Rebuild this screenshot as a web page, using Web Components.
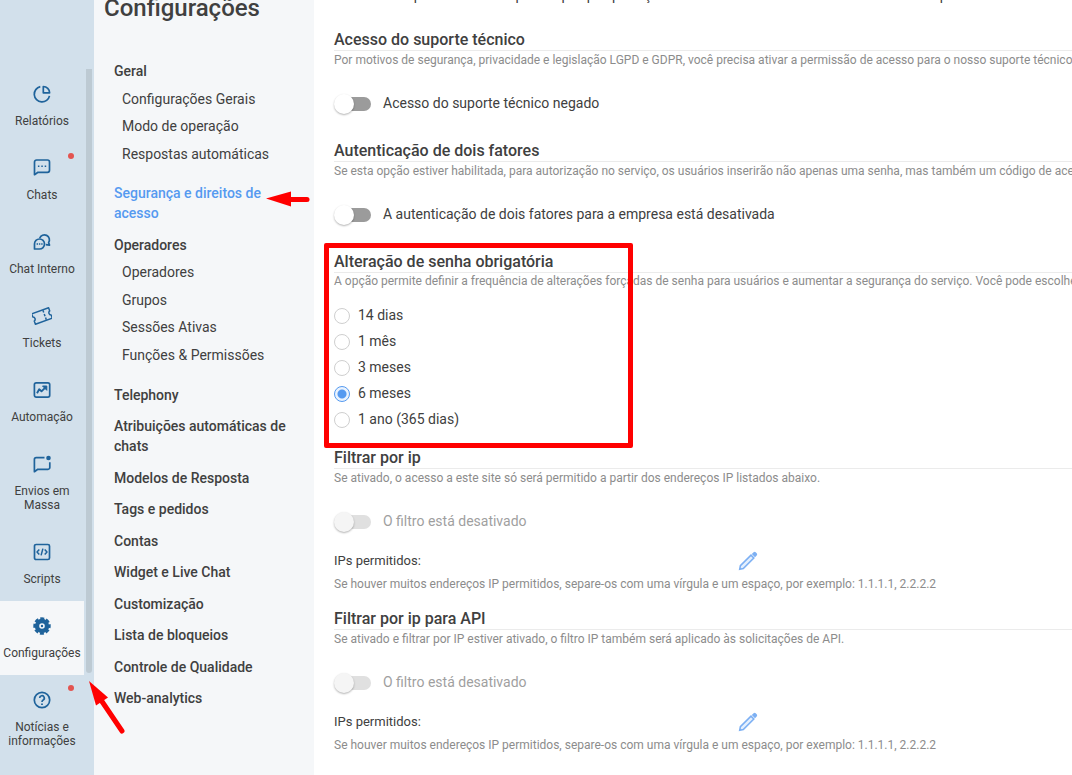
<!DOCTYPE html>
<html lang="pt">
<head>
<meta charset="utf-8">
<title>Configurações</title>
<style>
html, body { margin: 0; height: 100%; }
body { font-family: Roboto, "Liberation Sans", sans-serif; color: #404040; background: #fff; overflow: hidden; }
</style>
</head>
<body>
<settings-app></settings-app>
<script>
const define = (name, html, setup) => {
  const tpl = document.createElement('template');
  tpl.innerHTML = html;
  customElements.define(name, class extends HTMLElement {
    connectedCallback() {
      if (this.shadowRoot) return;
      this.attachShadow({ mode: 'open' }).append(tpl.content.cloneNode(true));
      if (setup) setup(this, this.shadowRoot);
    }
  });
};

const ICONS = {
  reports: '<path d="M8.300 2.700A7.700 7.700 0 1 0 17.500 11.800"/><path d="M11.300 2.500v6.300h6.300a6.300 6.300 0 0 0-6.300-6.300z"/>',
  chats: '<path d="M2.500 16.700V4a2 2 0 0 1 2-2h11a2 2 0 0 1 2 2v8.300a2 2 0 0 1-2 2H6z"/><path d="M5.900 8.200h1.500M9.300 8.200h1.500M12.700 8.200h1.500" stroke-width="1.500"/>',
  internal: '<path d="M7.700 6.200A5 5 0 1 1 16.600 10.600l.9 2.500-3.700-.5"/><path d="M2.500 17V12a5 5 0 1 1 5 5z"/><path d="M4.600 12h1.400M6.900 12h1.400M9.200 12h1.400" stroke-width="1.400"/>',
  tickets: '<g transform="rotate(-20 10 10)"><path d="M1 4.500h18v3.400a2.200 2.200 0 0 0 0 4.200v3.400H1v-3.400a2.200 2.200 0 0 0 0-4.200z" stroke-width="1.500"/><path d="M12.800 5v2.300M12.800 8.800v2.400M12.800 12.700V15" stroke-width="1.500"/></g>',
  automation: '<rect x="2.400" y="2.800" width="15.300" height="14.300" rx="1.800"/><path d="M5 13.300l2.200-4 2.300 2 4.500-4.500" stroke-width="1.900"/><path d="M10.500 6h4.300v4.300z" fill="currentColor" stroke-width="1"/>',
  mass: '<path d="M12.500 3.700H4.200a1.800 1.800 0 0 0-1.800 1.800v12.200l3.400-2.400H16a1.800 1.800 0 0 0 1.800-1.800V8.200"/><circle cx="16.500" cy="4" r="2.300" fill="currentColor" stroke="none"/>',
  scripts: '<rect x="2.500" y="2.500" width="15" height="15" rx="1.600"/><path d="M7.300 7.500L5 10l2.300 2.500M12.700 7.500L15 10l-2.300 2.500M10.900 6.600l-1.800 6.800" stroke-width="1.500"/>',
  settings: '<circle cx="10" cy="10" r="5" stroke-width="4.400"/><circle cx="10" cy="10" r="7.400" stroke-width="2.600" stroke-dasharray="3.900 1.912" stroke-dashoffset="1.950"/><circle cx="10" cy="10" r="1.200" fill="currentColor" stroke="none"/>',
  news: '<circle cx="10" cy="10" r="7.700"/><path d="M7.700 8.100a2.300 2.300 0 1 1 3.500 1.900c-.9.600-1.200 1-1.200 2"/><path d="M10 13.600v1.500" stroke-width="1.800"/>'
};

define('rail-item', `
<style>
:host { display: block; position: relative; }
a { display: flex; flex-direction: column; align-items: center; gap: 10px; padding: 15px 0; color: #404040; font-size: 12px; line-height: 14px; text-align: center; text-decoration: none; }
:host([active]) a { background: #f5f7f9; }
svg { display: block; width: 20px; height: 20px; color: #1f639b; }
.dot { position: absolute; top: 10px; right: 10px; width: 6px; height: 6px; border-radius: 50%; background: #e35450; display: none; }
:host([alert]) .dot { display: block; }
</style>
<a href="#"><svg viewBox="0 0 20 20" fill="none" stroke="currentColor" stroke-width="1.700" stroke-linejoin="round" aria-hidden="true"></svg><span><slot></slot></span></a><i class="dot"></i>`,
  (el, root) => { root.querySelector('svg').innerHTML = ICONS[el.getAttribute('icon')]; });

define('app-rail', `
<style>
:host { display: flex; align-items: flex-start; background: #d2e0eb; padding-top: 69px; box-sizing: border-box; gap: 2px; }
nav { flex: 0 0 84px; }
.bar { flex: 0 0 6px; height: 604px; background: #bdcad3; border-radius: 0 0 3px 3px; }
</style>
<nav>
<rail-item icon="reports">Relatórios</rail-item>
<rail-item icon="chats" alert>Chats</rail-item>
<rail-item icon="internal">Chat Interno</rail-item>
<rail-item icon="tickets">Tickets</rail-item>
<rail-item icon="automation">Automação</rail-item>
<rail-item icon="mass">Envios em<br>Massa</rail-item>
<rail-item icon="scripts">Scripts</rail-item>
<rail-item icon="settings" active>Configurações</rail-item>
<rail-item icon="news" alert>Notícias e informações</rail-item>
</nav><div class="bar"></div>`);

define('menu-link', `
<style>
:host { display: block; }
a { display: block; color: #404040; font-size: 14px; line-height: 20px; font-weight: 500; text-decoration: none; }
:host([sub]) a { padding-left: 8px; font-weight: 400; }
:host([active]) a { color: #559af0; }
</style>
<a href="#"><slot></slot></a>`);

define('settings-menu', `
<style>
:host { display: block; background: #f5f7f9; box-sizing: border-box; overflow: hidden; }
h1 { margin: -8px 0 0 10px; font-size: 24px; line-height: 32px; font-weight: 500; }
nav { padding: 37px 20px 0; }
section { margin-bottom: 19px; }
section + menu-link { margin-bottom: 12px; }
section:last-of-type { margin-bottom: 20px; }
[sub]:nth-of-type(even) { margin-top: 8px; }
[sub]:nth-of-type(odd) { margin-top: 7px; }
section:last-of-type [sub]:nth-of-type(even) { margin-top: 7px; }
section:last-of-type [sub]:nth-of-type(odd) { margin-top: 8px; }
.plain menu-link { margin-top: 12px; }
.plain menu-link:nth-child(even) { margin-top: 11px; }
.plain menu-link:first-child { margin-top: 0; }
</style>
<h1>Configurações</h1>
<nav>
<section><menu-link>Geral</menu-link><menu-link sub>Configurações Gerais</menu-link><menu-link sub>Modo de operação</menu-link><menu-link sub>Respostas automáticas</menu-link></section>
<menu-link active>Segurança e direitos de acesso</menu-link>
<section><menu-link>Operadores</menu-link><menu-link sub>Operadores</menu-link><menu-link sub>Grupos</menu-link><menu-link sub>Sessões Ativas</menu-link><menu-link sub>Funções &amp; Permissões</menu-link></section>
<div class="plain"><menu-link>Telephony</menu-link><menu-link>Atribuições automáticas de chats</menu-link><menu-link>Modelos de Resposta</menu-link><menu-link>Tags e pedidos</menu-link><menu-link>Contas</menu-link><menu-link>Widget e Live Chat</menu-link><menu-link>Customização</menu-link><menu-link>Lista de bloqueios</menu-link><menu-link>Controle de Qualidade</menu-link><menu-link>Web-analytics</menu-link></div>
</nav>`);

define('toggle-switch', `
<style>
:host { display: block; }
label { display: flex; align-items: center; gap: 12px; font-size: 14px; line-height: 20px; }
input { appearance: none; margin: 2px 0 0; width: 37px; height: 20px; border-radius: 10px; flex: none; display: flex; align-items: center; position: relative; }
input::before { content: ""; width: 34px; height: 14px; margin-left: 3px; border-radius: 7px; background: #9b9b9b; }
input::after { content: ""; position: absolute; left: 0; top: 0; width: 20px; height: 20px; border-radius: 50%; background: #fff; box-shadow: 0 1px 2px rgba(0,0,0,.3); }
:host([disabled]) label { color: #9f9f9f; }
:host([disabled]) input::before { background: #e0e0e0; }
:host([disabled]) input::after { background: #f5f5f5; }
</style>
<label><input type="checkbox" role="switch"><span><slot></slot></span></label>`,
  (el, root) => { root.querySelector('input').disabled = el.hasAttribute('disabled'); });

define('radio-group', `
<style>
:host { display: block; }
fieldset { border: 0; margin: 0; padding: 0; display: grid; gap: 6px; }
label { display: flex; gap: 8px; font-size: 14px; line-height: 20px; }
input { appearance: none; box-sizing: border-box; flex: none; width: 16px; height: 16px; margin: 3px 0 0; border: 1px solid #cfcfcf; border-radius: 50%; }
input:checked { border-color: #559af0; background: radial-gradient(circle, #559af0 4px, #eaf3fe 5px); }
</style>
<fieldset aria-label="Alteração de senha obrigatória">
<label><input type="radio" name="p"><span>14 dias</span></label>
<label><input type="radio" name="p"><span>1 mês</span></label>
<label><input type="radio" name="p"><span>3 meses</span></label>
<label><input type="radio" name="p" checked><span>6 meses</span></label>
<label><input type="radio" name="p"><span>1 ano (365 dias)</span></label>
</fieldset>`);

define('settings-section', `
<style>
:host { display: block; }
h2 { margin: 0; border-bottom: 1px solid #ebebeb; font-size: 16px; line-height: 20px; font-weight: 500; }
p { margin: 0 0 23px; font-size: 12px; line-height: 18px; color: #8c8c8c; white-space: nowrap; }
:host([compact]) p { margin-bottom: 16px; line-height: 16px; }
</style>
<h2><slot name="title"></slot></h2><p><slot name="note"></slot></p><slot></slot>`);

define('ip-list', `
<style>
:host { display: block; }
.row { display: flex; align-items: center; justify-content: space-between; max-width: 424px; margin-top: 19px; font-size: 13px; line-height: 20px; }
button { border: 0; padding: 0; background: none; color: #7db0f3; width: 20px; height: 20px; }
svg { display: block; }
p { margin: 4px 0 0; font-size: 12px; line-height: 18px; color: #8c8c8c; white-space: nowrap; }
</style>
<div class="row"><span>IPs permitidos:</span><button type="button" aria-label="Editar"><svg width="20" height="20" viewBox="0 0 20 20" fill="none" stroke="currentColor" stroke-width="1.600"><path d="M1.700 18.300l.7-3.600L13 4.200l2.800 2.800L5.300 17.600z" fill="#e4effd"/><path d="M13.800 3l1.800-1.700a1.500 1.500 0 0 1 2.100 0l1 1a1.500 1.500 0 0 1 0 2.100L17 6.200z" fill="currentColor" stroke="none"/></svg></button></div>
<p>Se houver muitos endereços IP permitidos, separe-os com uma vírgula e um espaço, por exemplo: 1.1.1.1, 2.2.2.2</p>`);

define('settings-app', `
<style>
:host { display: grid; grid-template-columns: 94px 220px minmax(0, 1fr); min-height: 100vh; position: relative; overflow: hidden; }
main { padding: 0 0 0 20px; overflow: hidden; }
.tail { margin: -15px 0 25px; font-size: 14px; line-height: 20px; white-space: pre; }
settings-section { margin-bottom: 27px; }
settings-section[compact] { margin-bottom: 19px; }
settings-section.ip { margin-bottom: 16px; }
.boxed { position: relative; }
.boxed::after { content: ""; position: absolute; left: -10px; top: -9px; width: 299px; height: 195px; border: 5px solid #f00; border-radius: 2px; }
.arrow { position: absolute; }
.a1 { left: 264px; top: 188px; }
.a2 { left: 86px; top: 678px; }
</style>
<app-rail></app-rail>
<settings-menu></settings-menu>
<main>
<p class="tail" aria-hidden="true"></p>
<settings-section><span slot="title">Acesso do suporte técnico</span><span slot="note">Por motivos de segurança, privacidade e legislação LGPD e GDPR, você precisa ativar a permissão de acesso para o nosso suporte técnico</span><toggle-switch>Acesso do suporte técnico negado</toggle-switch></settings-section>
<settings-section><span slot="title">Autenticação de dois fatores</span><span slot="note">Se esta opção estiver habilitada, para autorização no serviço, os usuários inserirão não apenas uma senha, mas também um código de acesso</span><toggle-switch>A autenticação de dois fatores para a empresa está desativada</toggle-switch></settings-section>
<settings-section class="boxed" compact><span slot="title">Alteração de senha obrigatória</span><span slot="note">A opção permite definir a frequência de alterações forçadas de senha para usuários e aumentar a segurança do serviço. Você pode escolher</span><radio-group></radio-group></settings-section>
<settings-section class="ip"><span slot="title">Filtrar por ip</span><span slot="note">Se ativado, o acesso a este site só será permitido a partir dos endereços IP listados abaixo.</span><toggle-switch disabled>O filtro está desativado</toggle-switch><ip-list></ip-list></settings-section>
<settings-section class="ip"><span slot="title">Filtrar por ip para API</span><span slot="note">Se ativado e filtrar por IP estiver ativado, o filtro IP também será aplicado às solicitações de API.</span><toggle-switch disabled>O filtro está desativado</toggle-switch><ip-list></ip-list></settings-section>
</main>
<svg class="arrow a1" width="48" height="24" viewBox="0 0 48 24" aria-hidden="true"><path d="M2 10.500L27 3.500v15z" fill="#f00"/><path d="M25 11.500h18" stroke="#f00" stroke-width="5" stroke-linecap="round"/></svg>
<svg class="arrow a2" width="42" height="58" viewBox="0 0 42 58" aria-hidden="true"><path d="M3 3L22 19.500 10 27.500z" fill="#f00"/><path d="M15 22L36 53" stroke="#f00" stroke-width="5" stroke-linecap="round"/></svg>`,
  (el, root) => {
    // Only the descenders of the scrolled-off line show at the top edge.
    const gap = n => ' '.repeat(n);
    root.querySelector('.tail').textContent =
      gap(23) + 'p' + gap(27) + 'p' + gap(11) + 'p' + gap(5) + 'p' + gap(5) + 'p' + gap(7) + 'ç' + gap(83) + 'p';
  });
</script>
</body>
</html>
